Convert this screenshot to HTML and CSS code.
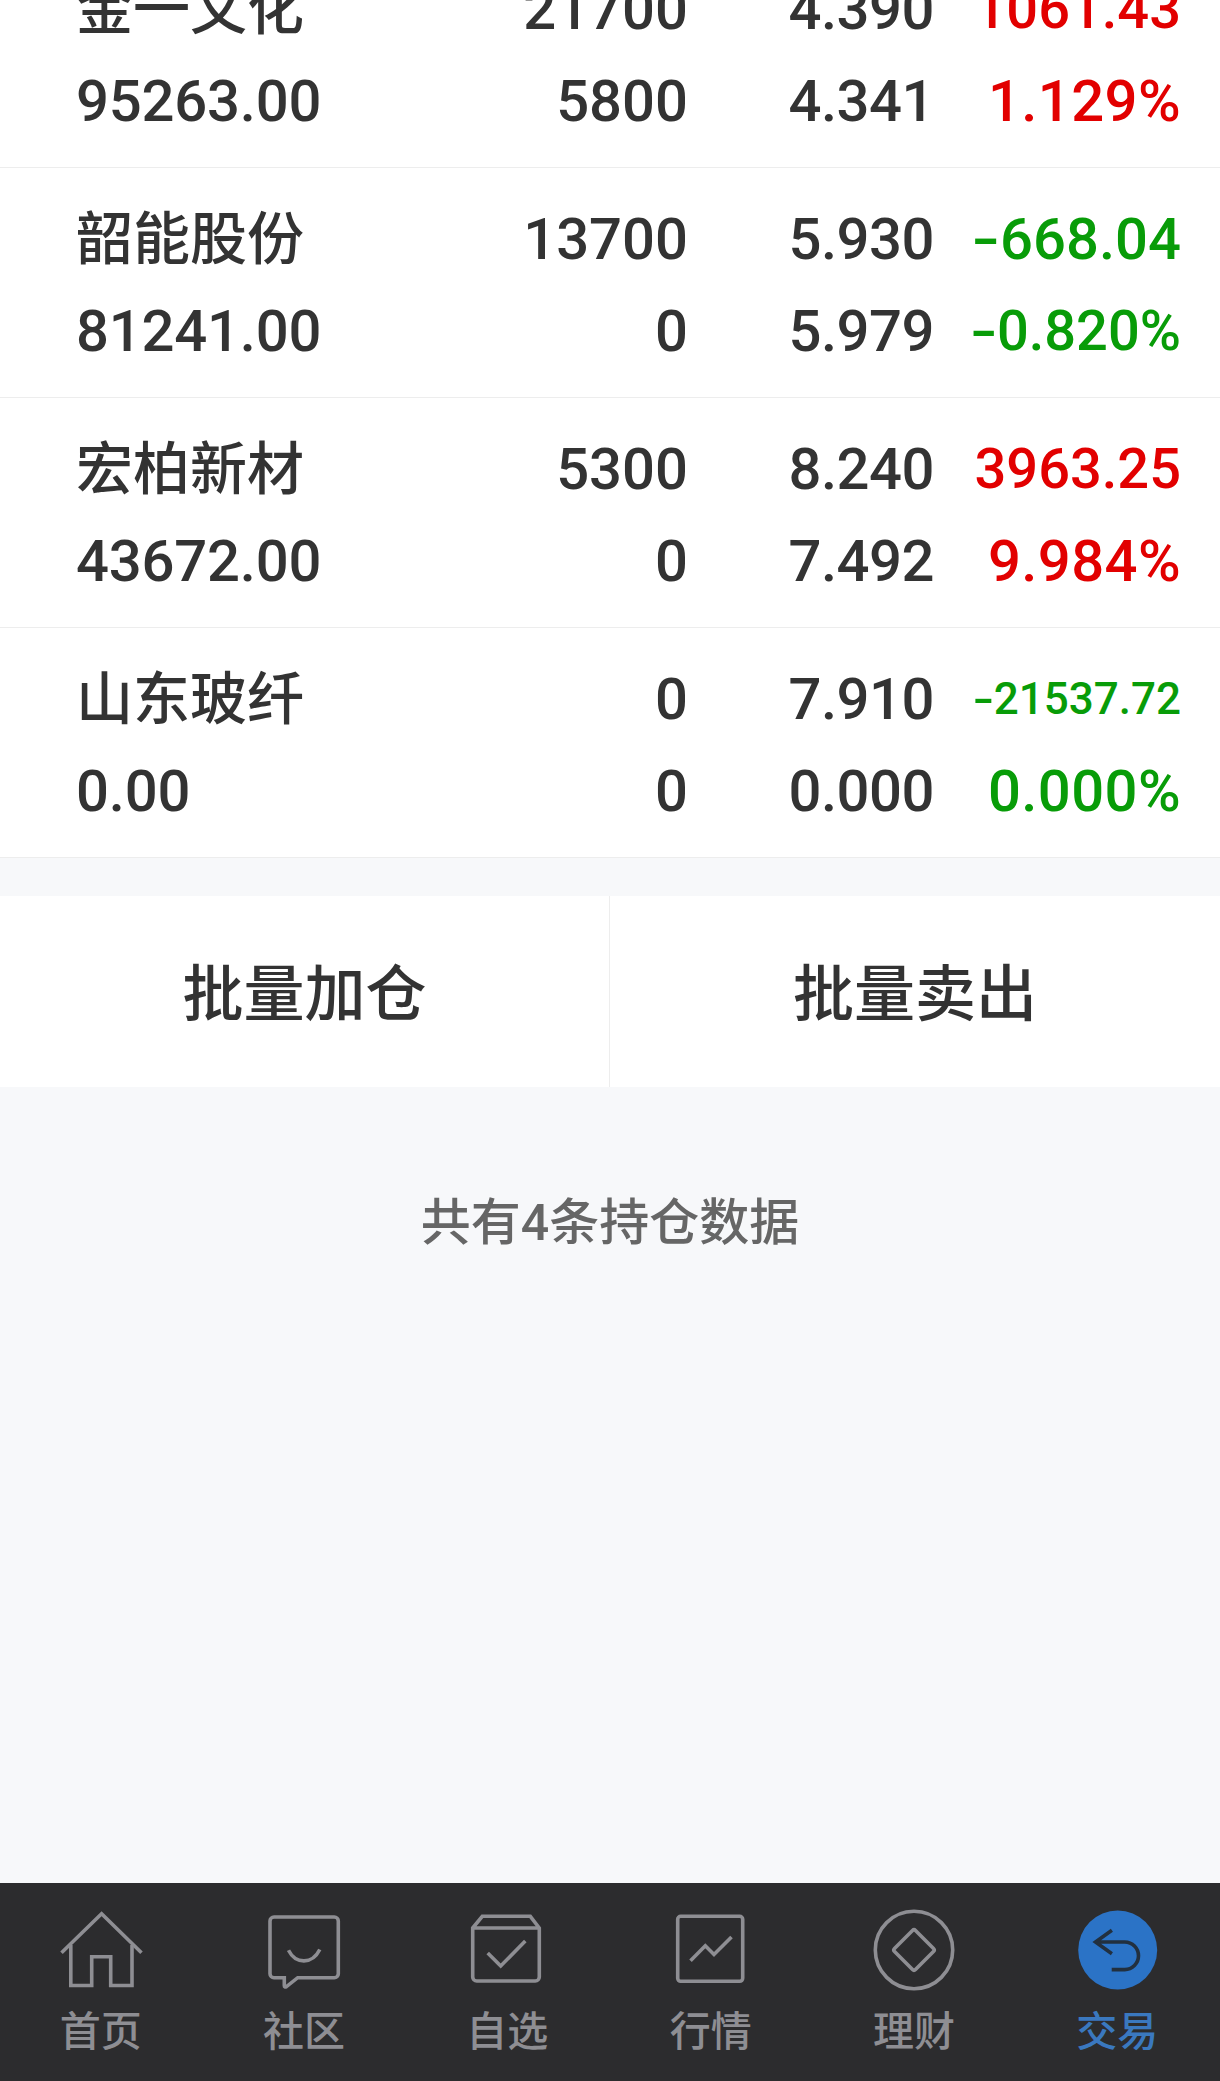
FILE: index.html
```
<!DOCTYPE html>
<html lang="zh-CN">
<head>
  <meta charset="UTF-8">
  <meta name="viewport" content="width=device-width, initial-scale=1.0">
  <title>持仓</title>
  <link rel="stylesheet" href="styles.css">
</head>
<body>
  <main class="content">
    <ul class="holdings">
      <li class="holding">
        <div class="col name"><span class="stock">金一文化</span><span>95263.00</span></div>
        <div class="col amount"><span>21700</span><span>5800</span></div>
        <div class="col price"><span>4.390</span><span>4.341</span></div>
        <div class="col profit up"><span class="fit">1061.43</span><span class="rate">1.129%</span></div>
      </li>
      <li class="holding">
        <div class="col name"><span class="stock">韶能股份</span><span>81241.00</span></div>
        <div class="col amount"><span>13700</span><span>0</span></div>
        <div class="col price"><span>5.930</span><span>5.979</span></div>
        <div class="col profit down"><span><i class="minus">-</i>668.04</span><span class="fit"><i class="minus">-</i>0.820%</span></div>
      </li>
      <li class="holding">
        <div class="col name"><span class="stock">宏柏新材</span><span>43672.00</span></div>
        <div class="col amount"><span>5300</span><span>0</span></div>
        <div class="col price"><span>8.240</span><span>7.492</span></div>
        <div class="col profit up"><span class="fit">3963.25</span><span class="rate">9.984%</span></div>
      </li>
      <li class="holding">
        <div class="col name"><span class="stock">山东玻纤</span><span>0.00</span></div>
        <div class="col amount"><span>0</span><span>0</span></div>
        <div class="col price"><span>7.910</span><span>0.000</span></div>
        <div class="col profit down"><span class="small"><i class="minus">-</i>21537.72</span><span class="rate">0.000%</span></div>
      </li>
    </ul>

    <div class="actions">
      <button type="button">批量加仓</button>
      <button type="button">批量卖出</button>
    </div>

    <p class="summary">共有4条持仓数据</p>
  </main>

  <nav class="tabbar">
    <a class="tab">
      <svg viewBox="0 0 84 84">
        <path d="M1.5 44.7 41.6 5.8 81.5 44.7"/>
        <path d="M10.8 37V77.5H31.7V48.7H50.7V77.5H72V37"/>
      </svg>
      <span>首页</span>
    </a>
    <a class="tab">
      <svg viewBox="0 0 84 84">
        <path d="M11 9H71.3a4 4 0 0 1 4 4V65.7a4 4 0 0 1-4 4H34.7L23.5 78.6q-2.2 1.2-2.2-1V69.7H11a4 4 0 0 1-4-4V13a4 4 0 0 1 4-4Z"/>
        <path d="M25.5 42.2C32.5 56 49 57 56.8 41.5"/>
      </svg>
      <span>社区</span>
    </a>
    <a class="tab">
      <svg viewBox="0 0 84 84">
        <path d="M6.7 20 16.3 8.3H64.3L73.3 20V69a4 4 0 0 1-4 4H10.7a4 4 0 0 1-4-4ZM6.7 20H73.3"/>
        <path d="M21.7 45 34.7 58 59.3 33"/>
      </svg>
      <span>自选</span>
    </a>
    <a class="tab">
      <svg viewBox="0 0 84 84">
        <rect x="7.7" y="8.3" width="65" height="65" rx="3"/>
        <path d="M20.5 52.7 35.3 37.8 44 46.5 61.5 29"/>
      </svg>
      <span>行情</span>
    </a>
    <a class="tab">
      <svg viewBox="0 0 84 84">
        <circle cx="41" cy="42" r="38.7"/>
        <path d="M39.5 22.5q1.5-1.5 3 0L60.5 40.5q1.5 1.5 0 3L42.5 61.5q-1.5 1.5-3 0L21.5 43.5q-1.5-1.5 0-3Z"/>
      </svg>
      <span>理财</span>
    </a>
    <a class="tab active">
      <svg viewBox="0 0 84 84">
        <circle class="disc" cx="41.7" cy="42" r="39.5"/>
        <path class="arrow" d="M35.9 22.3 19.5 34 35.9 45.8M19.5 34H48.7a13.8 13.8 0 0 1 0 27.6H35.7"/>
      </svg>
      <span>交易</span>
    </a>
  </nav>
</body>
</html>
```

FILE: styles.css
```
* {
  box-sizing: border-box;
  margin: 0;
  padding: 0;
}
body {
  display: flex;
  flex-direction: column;
  height: 100vh;
  overflow: hidden;
  background: #f7f8fa;
  color: #333;
  font-family: Roboto, 'Noto Sans CJK SC', sans-serif;
  font-weight: 500;
}
.content {
  flex: 1;
  overflow: hidden;
}

/* list is scrolled a little, first row is cut off */
.holdings {
  list-style: none;
  margin-top: -62px;
}
.holding {
  display: grid;
  grid-template-columns: 300px 312px 246px 1fr;
  height: 230px;
  padding: 25px 39px 0 76px;
  background: #fff;
  border-bottom: 1px solid #ededed;
  font-size: 58px;
  line-height: 92px;
}
.col {
  display: flex;
  flex-direction: column;
  align-items: flex-end;
  white-space: nowrap;
}
.col span {
  height: 92px;
}
.col.name {
  align-items: flex-start;
  letter-spacing: -0.2px;
}
.col.price {
  letter-spacing: -0.5px;
}
.col .stock {
  height: 82px;
  margin-bottom: 10px;
  font-family: 'Noto Sans CJK SC', sans-serif;
  font-size: 57px;
  line-height: 82px;
  letter-spacing: 0;
}
.up {
  color: #e20000;
}
.down {
  color: #089c08;
}
.rate {
  letter-spacing: 0.4px;
}
.fit {
  font-size: 56px;
}
.small {
  font-size: 44px;
}
.minus {
  display: inline-block;
  font-style: normal;
  transform: scaleX(1.4);
  transform-origin: right;
}

.actions {
  display: grid;
  grid-template-columns: 610px 1fr;
  height: 191px;
  margin-top: 38px;
  background: #fff;
}
.actions button {
  padding-bottom: 5px;
  border: none;
  background: none;
  color: #333;
  font: 500 61px 'Noto Sans CJK SC', sans-serif;
}
.actions button:first-child {
  border-right: 1px solid #ededed;
}
.summary {
  margin-top: 99px;
  color: #666;
  font-size: 50px;
  line-height: 74px;
  text-align: center;
}

.tabbar {
  display: flex;
  height: 198px;
  background: #2c2c2e;
}
.tab {
  flex: 1;
  display: flex;
  flex-direction: column;
  align-items: center;
  padding-top: 25px;
  color: #8e8e93;
  font-size: 41px;
  line-height: 60px;
}
.tab span {
  margin-top: 10px;
  margin-right: 2px;
}
.tab svg {
  width: 84px;
  height: 84px;
  fill: none;
  stroke: currentColor;
  stroke-width: 3.6;
}
.tab.active {
  color: #3a78bf;
}
.tab .disc {
  fill: #2b73c6;
  stroke: none;
}
.tab .arrow {
  stroke: #22303f;
}
```
